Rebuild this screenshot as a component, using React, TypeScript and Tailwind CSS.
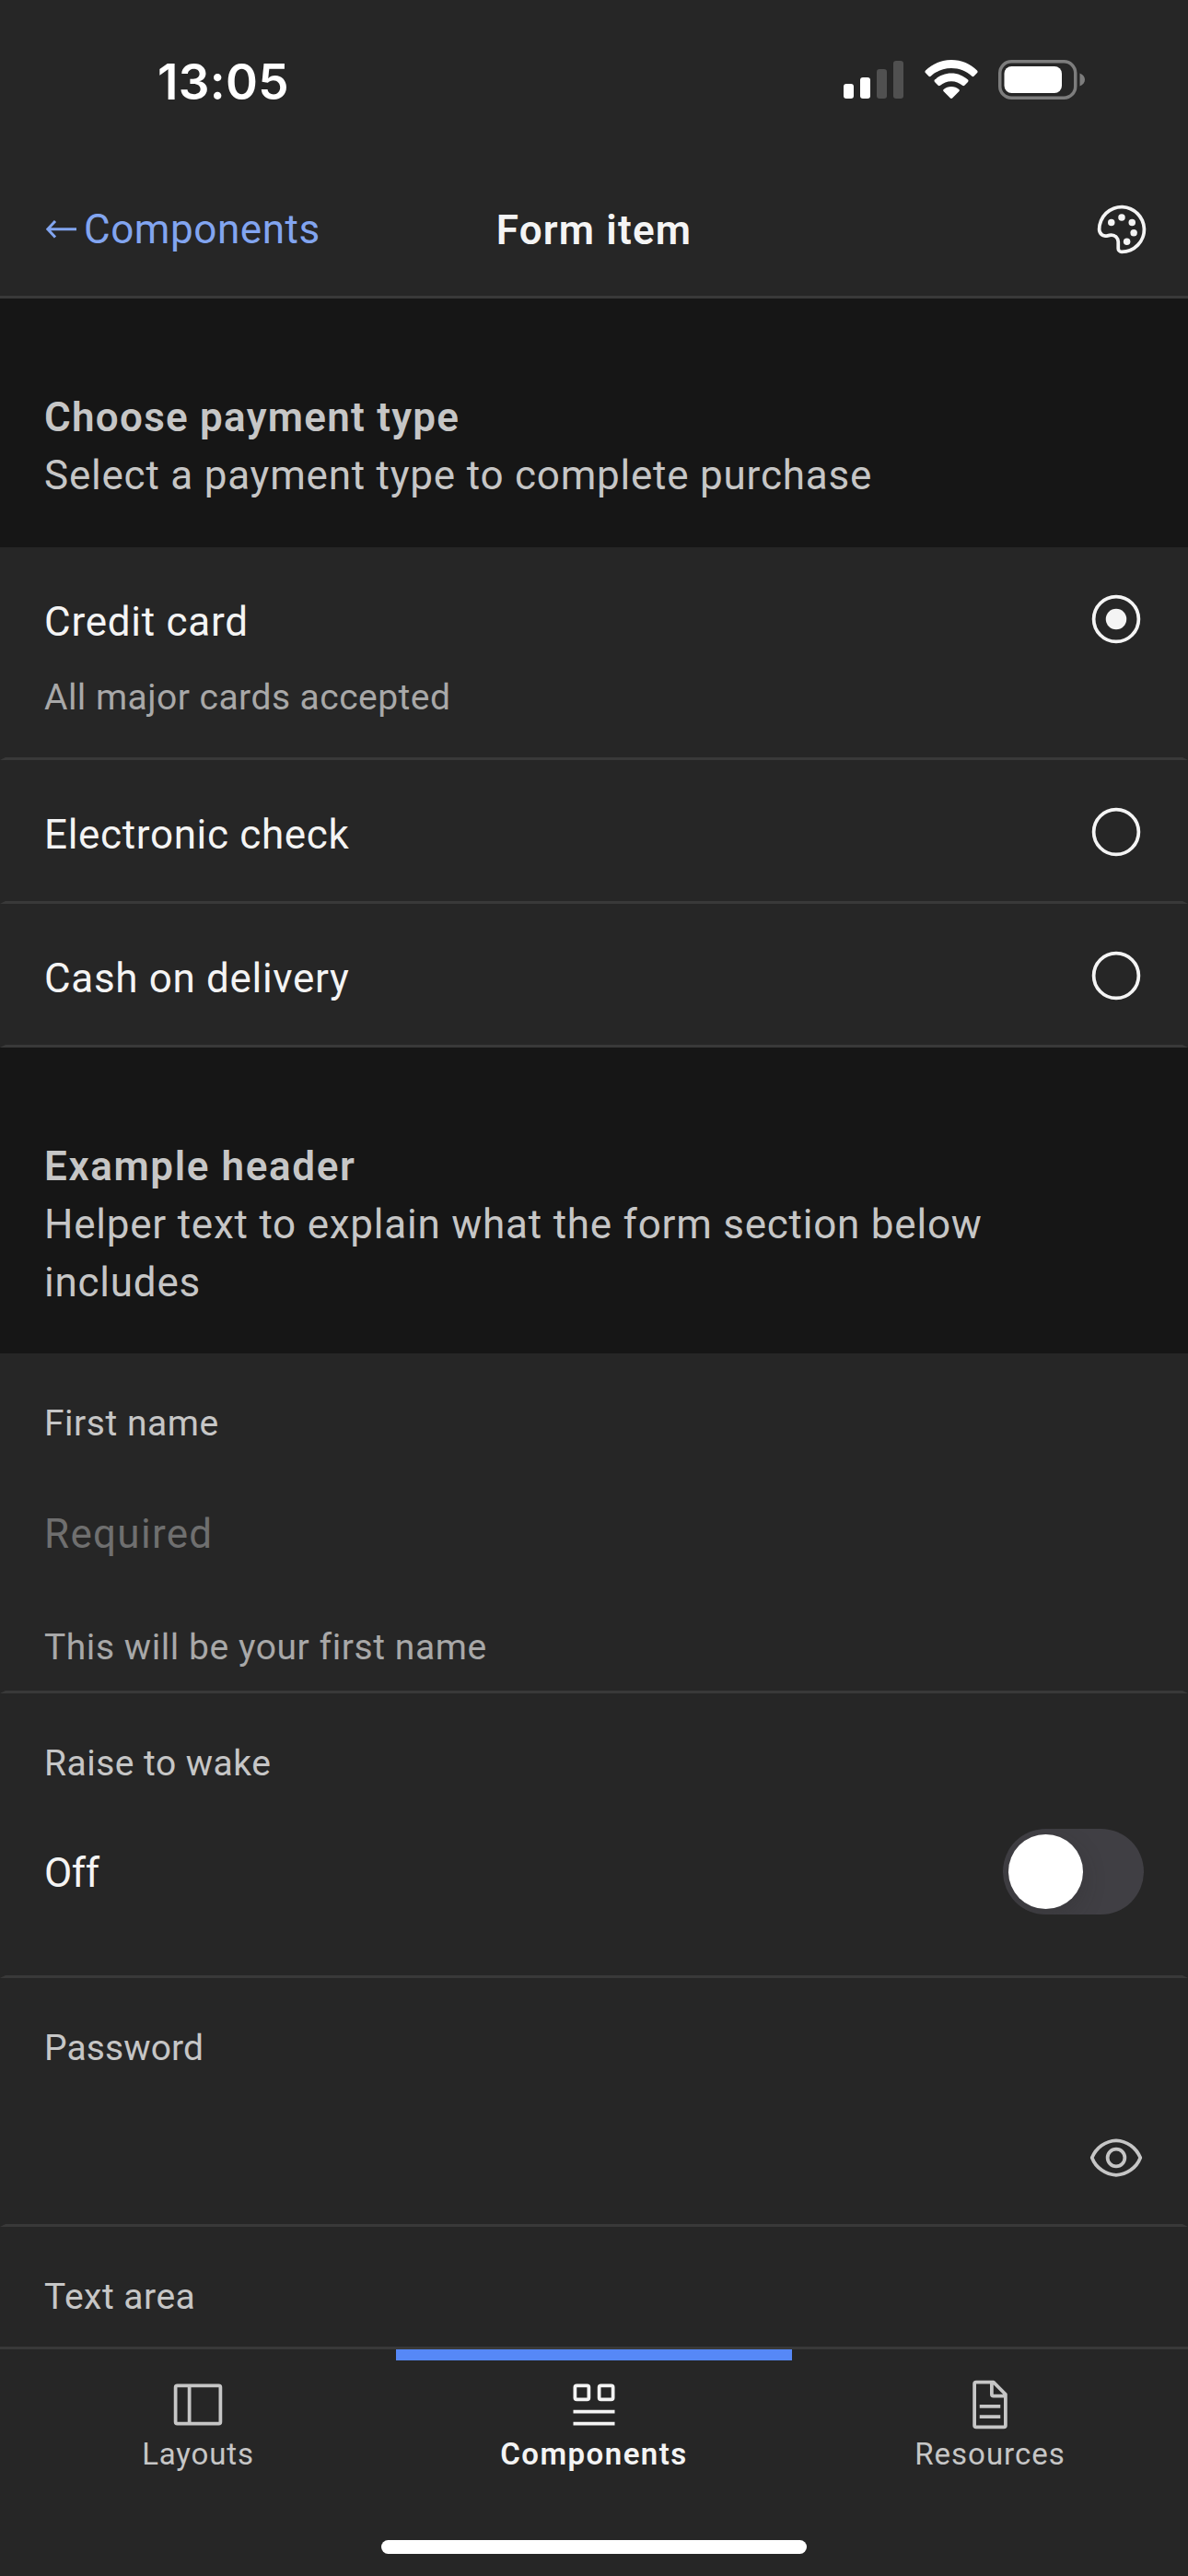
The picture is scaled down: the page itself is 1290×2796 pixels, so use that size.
import React from "react";
import type { ReactNode } from "react";

const body = "text-[44px] leading-[63px]";
const label = "text-[39px] leading-[54px]";
const rowBox =
  "shrink-0 border-x-[6px] border-b-[3px] border-x-transparent border-b-[#393939] bg-[#262626] px-[42px]";

function StatusBar() {
  return (
    <div className="flex h-[177px] shrink-0 justify-between pl-[171px] pr-[111px]">
      <span className="mt-[63px] font-['Inter',sans-serif] text-[53px] font-semibold leading-[52px] tracking-[0.3px] text-white">
        13:05
      </span>
      <div className="mt-[65px] flex h-[43px] items-start">
        <svg width="66" height="43" viewBox="0 0 66 43" className="mr-[22px]">
          <rect x="0" y="26" width="11" height="16" rx="3" fill="#fff" />
          <rect x="18" y="19" width="11" height="23" rx="3" fill="#fff" />
          <rect x="36" y="10" width="11" height="32" rx="3" fill="#505050" />
          <rect x="54" y="1" width="11" height="41" rx="3" fill="#505050" />
        </svg>
        <svg width="58" height="43" viewBox="0 0 58 43" className="mr-[22px]" fill="#fff">
          <path d="M29 0C40 0 50 4.4 57 11.6c.8.8.8 1.7.1 2.4l-3.6 3.8c-.6.6-1.5.6-2.1 0C45.500 12.300 37.600 9 29 9S12.500 12.300 6.600 17.800c-.6.6-1.500.6-2.100 0L.9 14c-.7-.7-.7-1.600.1-2.400C8 4.400 18 0 29 0z" />
          <path d="M29 14.500c7 0 13.200 2.700 18 7.100.7.700.7 1.600 0 2.300l-3.700 3.800c-.7.6-1.500.6-2.200.1C37.800 24.900 33.600 23.200 29 23.200s-8.800 1.700-12.100 4.600c-.7.500-1.500.5-2.200-.1L11 23.900c-.7-.7-.7-1.600 0-2.300 4.800-4.400 11-7.100 18-7.100z" />
          <path d="M29 29c3.200 0 6.100 1.200 8.300 3.100.7.600.7 1.500 0 2.200l-7.200 7.300c-.6.6-1.600.6-2.200 0l-7.200-7.300c-.7-.7-.7-1.600 0-2.200C22.900 30.200 25.800 29 29 29z" />
        </svg>
        <svg width="95" height="43" viewBox="0 0 95 43">
          <rect x="1.750" y="1.750" width="82" height="39.500" rx="12.500" fill="none" stroke="#7d7d7d" strokeWidth="3.500" />
          <rect x="6.500" y="7" width="62.500" height="29" rx="8" fill="#fff" />
          <path d="M88.500 14.500c3.300 1.300 5.500 4 5.500 7s-2.200 5.700-5.500 7z" fill="#7d7d7d" />
        </svg>
      </div>
    </div>
  );
}

function NavHeader() {
  return (
    <header className="grid h-[147px] shrink-0 grid-cols-3 items-center border-b-[3px] border-[#393939]">
      <a className="flex items-center gap-[8px] pl-[50px] text-[#82a5f0]">
        <svg width="33" height="20" viewBox="0 0 33 20" fill="none" stroke="currentColor" strokeWidth="3">
          <path d="M10 1 1.800 9.700 10 18.500M2 9.700h31" />
        </svg>
        <span className="text-[44px] leading-[63px] tracking-[0.57px]">Components</span>
      </a>
      <h1 className="pt-[2px] text-center text-[44px] font-semibold leading-[63px] tracking-[1.19px] text-[#f4f4f4]">
        Form item
      </h1>
      <svg width="60" height="60" viewBox="0 0 32 32" fill="#f4f4f4" className="mr-[42px] justify-self-end">
        <circle cx="10" cy="12" r="2" />
        <circle cx="16" cy="9" r="2" />
        <circle cx="22" cy="12" r="2" />
        <circle cx="23" cy="18" r="2" />
        <circle cx="19" cy="23" r="2" />
        <path d="M16.540 2A14 14 0 0 0 2 16a4.820 4.820 0 0 0 6.090 4.650l1.120-.31A3 3 0 0 1 13 23.240V27a3 3 0 0 0 3 3A14 14 0 0 0 30 15.460 14.050 14.050 0 0 0 16.540 2zm8.110 22.310A11.930 11.930 0 0 1 16 28a1 1 0 0 1-1-1v-3.760a5 5 0 0 0-5-5 5.070 5.070 0 0 0-1.330.18l-1.120.31A2.820 2.820 0 0 1 4 16 12 12 0 0 1 16.470 4 12.180 12.180 0 0 1 28 15.530a11.890 11.890 0 0 1-3.350 8.780z" />
      </svg>
    </header>
  );
}

function RadioIcon({ checked }: { checked?: boolean }) {
  return (
    <svg width="60" height="60" viewBox="0 0 32 32" className="-mt-[2px] shrink-0">
      <circle cx="16" cy="16" r="13" fill="none" stroke="#f4f4f4" strokeWidth="2" />
      {checked && <circle cx="16" cy="16" r="6" fill="#f4f4f4" />}
    </svg>
  );
}

function RadioRow({
  title,
  tracking,
  checked,
  children,
}: {
  title: string;
  tracking: string;
  checked?: boolean;
  children?: ReactNode;
}) {
  return (
    <div className={`${rowBox} ${children ? "h-[231px]" : "h-[156px]"} pt-[50px]`}>
      <div className="flex justify-between">
        <span className={`${body} ${tracking} text-[#f4f4f4]`}>{title}</span>
        <RadioIcon checked={checked} />
      </div>
      {children}
    </div>
  );
}

function Tab({
  name,
  active,
  tracking,
  children,
}: {
  name: string;
  active?: boolean;
  tracking: string;
  children: ReactNode;
}) {
  return (
    <div className={`flex flex-col items-center ${active ? "text-[#f4f4f4]" : "text-[#c6c6c6]"}`}>
      <div className={`h-[12px] w-full ${active ? "bg-[#5688f7]" : ""}`} />
      <svg width="60" height="60" viewBox="0 0 32 32" fill="currentColor" className="mt-[18px]">
        {children}
      </svg>
      <span className={`mt-[3px] text-[33px] leading-[42px] ${active ? "font-semibold" : ""} ${tracking}`}>{name}</span>
    </div>
  );
}

export default function App() {
  return (
    <div className="flex h-[2796px] w-[1290px] flex-col overflow-hidden bg-[#262626] font-['Roboto',sans-serif] text-[#c6c6c6]">
      <StatusBar />
      <NavHeader />

      <section className="h-[270px] shrink-0 bg-[#161616] px-[48px] pt-[98px]">
        <h2 className={`${body} font-semibold tracking-[1.25px]`}>Choose payment type</h2>
        <p className={`${body} tracking-[0.78px]`}>Select a payment type to complete purchase</p>
      </section>

      <RadioRow title="Credit card" tracking="tracking-[0.75px]" checked>
        <p className={`${label} mt-[23px] tracking-[0.46px] text-[#a8a8a8]`}>All major cards accepted</p>
      </RadioRow>
      <RadioRow title="Electronic check" tracking="tracking-[0.66px]" />
      <RadioRow title="Cash on delivery" tracking="tracking-[0.67px]" />

      <section className="h-[332px] shrink-0 bg-[#161616] px-[48px] pt-[98px]">
        <h2 className={`${body} font-semibold tracking-[1.61px]`}>Example header</h2>
        <p className={`${body} w-[1100px] tracking-[0.77px]`}>Helper text to explain what the form section below includes</p>
      </section>

      <div className={`${rowBox} h-[369px] pt-[49px]`}>
        <div className={`${label} tracking-[0.53px]`}>First name</div>
        <div className={`${body} mt-[62px] tracking-[1.3px] text-[#6f6f6f]`}>Required</div>
        <div className={`${label} mt-[64px] tracking-[0.56px] text-[#a8a8a8]`}>This will be your first name</div>
      </div>

      <div className={`${rowBox} h-[309px] pt-[49px]`}>
        <div className={`${label} tracking-[0.48px]`}>Raise to wake</div>
        <div className="mt-[44px] flex items-center justify-between">
          <span className={`${body} pt-[3px] tracking-[-0.4px] text-[#f4f4f4]`}>Off</span>
          <div className="flex h-[93px] w-[153px] items-center overflow-hidden rounded-full bg-[#403f44] px-[6px]">
            <div className="size-[81px] rounded-full bg-white shadow-[0_9px_24px_rgba(38,38,38,0.25)]" />
          </div>
        </div>
      </div>

      <div className={`${rowBox} h-[270px] pt-[49px]`}>
        <div className={`${label} tracking-[0.1px]`}>Password</div>
        <svg width="60" height="60" viewBox="0 0 32 32" fill="#c6c6c6" className="ml-auto mt-[62px]">
          <path d="M30.940 15.660A16.690 16.690 0 0 0 16 5 16.690 16.690 0 0 0 1.060 15.660a1 1 0 0 0 0 .68A16.690 16.690 0 0 0 16 27a16.690 16.690 0 0 0 14.940-10.660 1 1 0 0 0 0-.68zM16 25c-5.300 0-10.900-3.930-12.930-9C5.100 10.930 10.700 7 16 7s10.900 3.930 12.930 9C26.900 21.070 21.300 25 16 25z" />
          <path d="M16 10a6 6 0 1 0 6 6 6 6 0 0 0-6-6zm0 10a4 4 0 1 1 4-4 4 4 0 0 1-4 4z" />
        </svg>
      </div>

      <div className="h-[130px] shrink-0 px-[48px] pt-[49px]">
        <div className={`${label} tracking-[0.5px]`}>Text area</div>
      </div>

      <nav className="grid h-[210px] shrink-0 grid-cols-3 border-t-[3px] border-[#393939] bg-[#262626]">
        <Tab name="Layouts" tracking="tracking-[0.85px]">
          <path d="M28 4H4a2 2 0 0 0-2 2v20a2 2 0 0 0 2 2h24a2 2 0 0 0 2-2V6a2 2 0 0 0-2-2zM4 6h6v20H4zm24 20H12V6h16z" />
        </Tab>
        <Tab name="Components" tracking="tracking-[1.46px]" active>
          <path d="M12 4H6a2 2 0 0 0-2 2v6a2 2 0 0 0 2 2h6a2 2 0 0 0 2-2V6a2 2 0 0 0-2-2zm0 8H6V6h6zM26 4h-6a2 2 0 0 0-2 2v6a2 2 0 0 0 2 2h6a2 2 0 0 0 2-2V6a2 2 0 0 0-2-2zm0 8h-6V6h6z" />
          <path d="M4 19h24v2H4zM4 26h24v2H4z" />
        </Tab>
        <Tab name="Resources" tracking="tracking-[1px]">
          <path d="M25.700 9.300l-7-7A.9.9 0 0 0 18 2H8a2 2 0 0 0-2 2v24a2 2 0 0 0 2 2h16a2 2 0 0 0 2-2V10a.9.900 0 0 0-.3-.7zM18 4.400l5.600 5.600H18zM24 28H8V4h8v6a2 2 0 0 0 2 2h6z" />
          <path d="M10 22h12v2H10zM10 16h12v2H10z" />
        </Tab>
      </nav>
      <div className="mx-auto h-[15px] w-[462px] shrink-0 rounded-full bg-white" />
    </div>
  );
}
